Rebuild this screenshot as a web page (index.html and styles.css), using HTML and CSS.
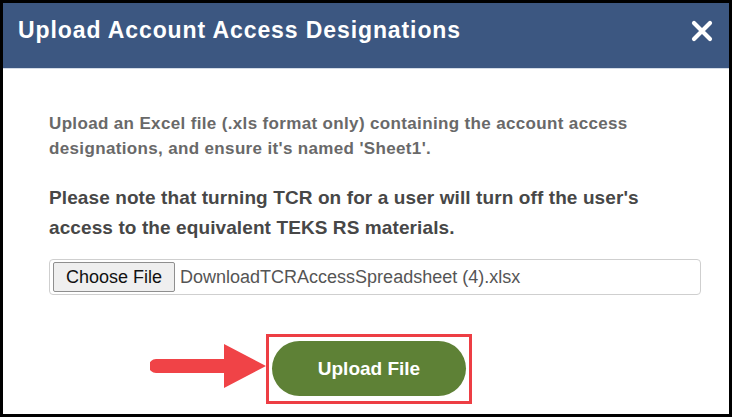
FILE: index.html
```html
<!DOCTYPE html>
<html lang="en">

<head>
    <meta charset="UTF-8">
    <title>Upload Account Access Designations</title>
    <link rel="stylesheet" href="styles.css">
</head>

<body>
<div class="dialog">
    <div class="dialog-header">
        <h1>Upload Account Access Designations</h1>
        <span class="close">
            <svg width="22" height="22" viewBox="0 0 22 22">
                <path d="M3 3 L19 19 M19 3 L3 19" stroke="#fff" stroke-width="4.2" stroke-linecap="round"/>
            </svg>
        </span>
    </div>

    <div class="dialog-body">
        <p class="hint">Upload an Excel file (.xls format only) containing the account access designations, and ensure it's named 'Sheet1'.</p>
        <p class="note">Please note that turning TCR on for a user will turn off the user's access to the equivalent TEKS RS materials.</p>

        <div class="file-field">
            <span class="choose">Choose File</span>
            <span class="file-name">DownloadTCRAccessSpreadsheet (4).xlsx</span>
        </div>

        <div class="actions">
            <div class="highlight">
                <svg class="arrow" width="118" height="44" viewBox="0 0 118 44">
                    <path d="M6 15 L74 15 L74 0 L116 22 L74 44 L74 29 L6 29 A7 7 0 0 1 6 15 Z" fill="#f04347"/>
                </svg>
                <button class="upload">Upload File</button>
            </div>
        </div>
    </div>
</div>
</body>
</html>
```

FILE: styles.css
```css
html, body {
    margin: 0;
    padding: 0;
}

body {
    background-color: black;
    padding: 3px;
    height: 417px;
    box-sizing: border-box;
    font-family: "Liberation Sans", Arial, sans-serif;
}

.dialog {
    background-color: white;
    height: 411px;
}

.dialog-header {
    height: 65px;
    background-color: #3c5781;
    border-bottom: 1px solid #d3dbe6;
    display: flex;
    align-items: center;
    justify-content: space-between;
    padding: 0 15px;
}

.dialog-header h1 {
    margin: 0 0 10px 0;
    color: white;
    font-size: 23px;
    font-weight: bold;
    letter-spacing: 0.9px;
}

.close {
    display: flex;
    margin: 0 1px 10px 0;
}

.dialog-body {
    padding: 42px 28px 0 46px;
}

.dialog-body p {
    margin: 0;
    font-weight: bold;
}

.hint {
    color: #696969;
    font-size: 17px;
    line-height: 25px;
    letter-spacing: 0.35px;
}

.note {
    color: #474747;
    font-size: 19px;
    line-height: 30px;
    letter-spacing: 0.1px;
    margin-top: 22px !important;
}

.file-field {
    margin-top: 16px;
    height: 34px;
    border: 1px solid #cfcfcf;
    border-radius: 4px;
    display: flex;
    align-items: center;
    padding-left: 3px;
}

.choose {
    height: 30px;
    box-sizing: border-box;
    padding: 0 12px;
    display: flex;
    align-items: center;
    border: 1px solid #8f8f8f;
    border-radius: 2px;
    background-color: #efefef;
    color: #111;
    font-size: 18px;
}

.file-name {
    margin-left: 5px;
    color: #555;
    font-size: 18px;
}

.actions {
    margin-top: 39px;
    display: flex;
}

.highlight {
    position: relative;
    border: 3px solid #ed3e44;
    padding: 4px 3px 5px 3px;
    margin-left: 217px;
}

.arrow {
    position: absolute;
    right: 100%;
    top: 7px;
    margin-right: 1px;
}

.upload {
    width: 194px;
    height: 55px;
    border: none;
    border-radius: 28px;
    background-color: #5e8136;
    color: white;
    font-family: "Liberation Sans", Arial, sans-serif;
    font-size: 19px;
    font-weight: bold;
}
```
